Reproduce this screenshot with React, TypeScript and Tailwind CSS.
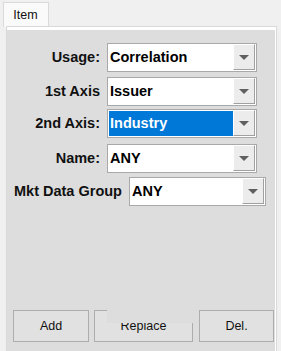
import React from "react";

const font = { fontFamily: '"Liberation Sans", Arial, sans-serif' };

function Combo({
  value,
  selected,
  width,
}: {
  value: string;
  selected?: boolean;
  width: string;
}) {
  return (
    <div className={`flex h-[29px] ${width} border border-[#a9a9a9] bg-white`}>
      <div className="flex flex-1 py-[1px] pl-[1px]">
        <div
          className={`flex flex-1 items-center pl-[1px] text-[14.5px] font-bold leading-none ${
            selected ? "bg-[#0078d7] text-white" : "text-black"
          }`}
        >
          {value}
        </div>
      </div>
      <div className="mb-[1px] mr-[1px] flex w-[22px] items-center justify-center border-t border-l border-r border-b border-t-white border-l-white border-r-[#a0a0a0] border-b-[#a0a0a0] bg-[#ececec]">
        <svg width="10" height="5" viewBox="0 0 10 5">
          <polygon points="0,0 10,0 5,5" fill="#606060" />
        </svg>
      </div>
    </div>
  );
}

function Row({
  label,
  value,
  selected,
  className,
}: {
  label: string;
  value: string;
  selected?: boolean;
  className: string;
}) {
  return (
    <div className={`flex items-center ${className}`}>
      <p className="w-[93px] text-right text-[14.5px] font-bold text-[#111]">
        {label}
      </p>
      <div className="ml-[7px]">
        <Combo value={value} selected={selected} width="w-[150px]" />
      </div>
    </div>
  );
}

export default function App() {
  return (
    <div className="h-[351px] w-[281px] overflow-hidden bg-[#f0f0f0] pt-[2px]" style={font}>
      <div className="ml-[3px] flex h-[25px] w-[46px] items-center justify-center border border-b-0 border-[#d9d9d9] bg-[#fafafa] pr-[1px] text-[12.5px] text-[#111]">
        Item
      </div>
      <div className="ml-[6px] h-[330px] w-[271px] -mt-[1px] border border-[#d9d9d9] bg-white pt-[3px] pr-[1px]">
        <div className="relative flex h-full flex-col bg-[#dddddd]">
          <Row label="Usage:" value="Correlation" className="mt-[13px]" />
          <Row label="1st Axis" value="Issuer" className="mt-[5px]" />
          <Row label="2nd Axis:" value="Industry" selected className="mt-[3px]" />
          <Row label="Name:" value="ANY" className="mt-[6px]" />
          <div className="mt-[4px] flex items-center">
            <p className="ml-[7px] text-[14.5px] font-bold text-[#111]">Mkt Data Group</p>
            <div className="ml-[7px]">
              <Combo value="ANY" width="w-[137px]" />
            </div>
          </div>
          <div className="mt-auto mb-[13px] ml-[6px] flex gap-[5px] text-[12.5px] text-[#111]">
            <button className="h-[32px] w-[76px] border border-[#adadad] bg-[#e1e1e1]">Add</button>
            <button className="h-[32px] w-[99px] border border-[#adadad] bg-[#e1e1e1]">Replace</button>
            <button className="ml-[1px] h-[32px] w-[75px] border border-[#adadad] bg-[#e1e1e1]">Del.</button>
          </div>
          <div className="absolute left-[100px] top-[278px] h-[15px] w-[86px] bg-[#dddddd]" />
        </div>
      </div>
    </div>
  );
}
